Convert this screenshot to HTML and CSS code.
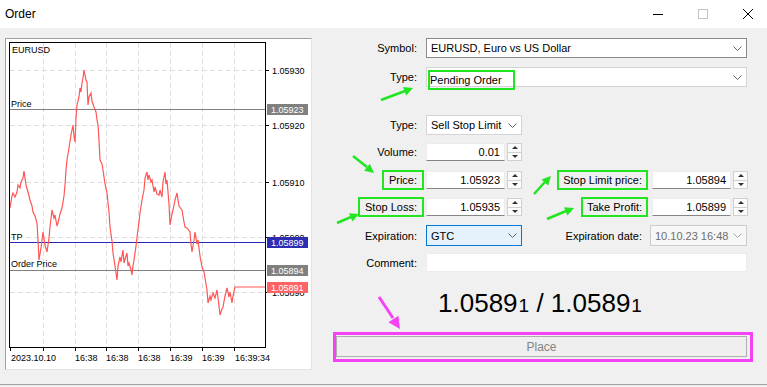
FILE: index.html
```html
<!DOCTYPE html>
<html lang="en">
<head>
    <meta charset="UTF-8">
    <title>Order</title>
    <link rel="stylesheet" href="styles.css">
</head>
<body>
    <div class="titlebar">
        <span class="title">Order</span>
        <div class="win-controls">
            <svg viewBox="0 0 10 10"><line x1="0" y1="5.5" x2="10" y2="5.5" stroke="#000"/></svg>
            <svg viewBox="0 0 10 10"><rect x="0.5" y="0.5" width="9" height="9" fill="none" stroke="#c4c4c4"/></svg>
            <svg viewBox="0 0 10 10"><path d="M0 0L10 10M10 0L0 10" stroke="#000" fill="none"/></svg>
        </div>
    </div>

    <div class="window">
        <div class="chart-panel">
            <svg class="chart" width="305" height="330" viewBox="6 39 305 330">
                <g class="grid">
                    <line x1="43.5" y1="43" x2="43.5" y2="347"/>
                    <line x1="75.5" y1="43" x2="75.5" y2="347"/>
                    <line x1="106.5" y1="43" x2="106.5" y2="347"/>
                    <line x1="138.5" y1="43" x2="138.5" y2="347"/>
                    <line x1="170.5" y1="43" x2="170.5" y2="347"/>
                    <line x1="202.5" y1="43" x2="202.5" y2="347"/>
                    <line x1="234.5" y1="43" x2="234.5" y2="347"/>
                    <line x1="10" y1="70.5" x2="265" y2="70.5"/>
                    <line x1="10" y1="125.5" x2="265" y2="125.5"/>
                    <line x1="10" y1="182.5" x2="265" y2="182.5"/>
                    <line x1="10" y1="237.5" x2="265" y2="237.5"/>
                    <line x1="10" y1="292.5" x2="265" y2="292.5"/>
                </g>

                <g class="ticks">
                    <line x1="265" y1="70.5" x2="269" y2="70.5"/>
                    <line x1="265" y1="125.5" x2="269" y2="125.5"/>
                    <line x1="265" y1="182.5" x2="269" y2="182.5"/>
                    <line x1="265" y1="237.5" x2="269" y2="237.5"/>
                    <line x1="265" y1="292.5" x2="269" y2="292.5"/>
                    <line x1="10.5" y1="347" x2="10.5" y2="351"/>
                    <line x1="43.5" y1="347" x2="43.5" y2="351"/>
                    <line x1="75.5" y1="347" x2="75.5" y2="351"/>
                    <line x1="106.5" y1="347" x2="106.5" y2="351"/>
                    <line x1="138.5" y1="347" x2="138.5" y2="351"/>
                    <line x1="170.5" y1="347" x2="170.5" y2="351"/>
                    <line x1="202.5" y1="347" x2="202.5" y2="351"/>
                    <line x1="234.5" y1="347" x2="234.5" y2="351"/>
                </g>

                <g class="axis-text">
                    <text x="272" y="74">1.05930</text>
                    <text x="272" y="129">1.05920</text>
                    <text x="272" y="186">1.05910</text>
                    <text x="272" y="241">1.05900</text>
                    <text x="272" y="296">1.05890</text>
                    <text x="11" y="361">2023.10.10</text>
                    <text x="75" y="361">16:38</text>
                    <text x="106" y="361">16:38</text>
                    <text x="138" y="361">16:38</text>
                    <text x="170" y="361">16:39</text>
                    <text x="202" y="361">16:39</text>
                    <text x="235" y="361">16:39:34</text>
                </g>

                <line class="lvl-grey" x1="10" y1="109.5" x2="265" y2="109.5"/>
                <line class="lvl-blue" x1="10" y1="242.5" x2="265" y2="242.5"/>
                <line class="lvl-grey" x1="10" y1="270.5" x2="265" y2="270.5"/>

                <polyline class="quote-line" points="10,208 12,196 13,193 15,197 17,192 18,185 20,188 21,182 23,178 24,171 26,185 28,192 30,200 32,206 33,212 35,216 37,223 38,240 39,260 41,248 43,232 45,245 47,252 49,238 50,227 52,210 54,218 55,215 57,226 58,223 60,214 62,208 64,196 65,185 66,170 67,160 69,148 71,135 72,130 73,125 74,136 75,142 76,118 77,105 79,97 80,88 81,92 82,83 83,78 84,70 86,80 87,82 88,105 89,97 91,93 92,101 94,107 96,112 97,120 98,125 99,140 100,160 102,164 103,170 105,184 107,193 109,212 110,227 112,241 113,253 115,266 117,280 118,266 120,257 121,262 123,250 124,263 126,256 127,253 128,266 129,263 131,270 132,275 133,266 134,260 136,246 137,237 139,222 140,213 142,200 144,190 145,178 147,172 148,180 149,175 151,182 152,180 154,192 155,187 157,194 159,195 160,190 162,197 163,182 165,172 166,184 167,180 169,204 170,225 172,214 173,210 175,200 177,193 179,206 182,210 184,222 185,227 187,228 190,232 191,244 192,252 194,240 195,232 197,244 198,240 200,256 202,267 204,272 205,278 206,284 207,290 208,303 210,296 211,300 213,293 215,298 217,290 219,306 220,315 222,309 223,307 225,296 227,288 229,297 230,292 232,303 233,296 235,287 265,287"/>

                <g class="chart-labels">
                    <text x="12" y="53">EURUSD</text>
                    <text x="11" y="107">Price</text>
                    <text x="11" y="240">TP</text>
                    <text x="11" y="267">Order Price</text>
                </g>

                <rect class="plot" x="9.5" y="42.5" width="256" height="305"/>

                <rect class="tag-grey" x="267" y="104" width="41" height="11"/>
                <rect class="tag-blue" x="267" y="237" width="41" height="11"/>
                <rect class="tag-grey" x="267" y="265" width="41" height="11"/>
                <rect class="tag-red" x="267" y="282" width="41" height="11"/>
                <g class="tag-text">
                    <text x="271" y="113">1.05923</text>
                    <text x="271" y="246">1.05899</text>
                    <text x="271" y="274">1.05894</text>
                    <text x="271" y="291">1.05891</text>
                </g>
            </svg>
        </div>

        <form class="order-form">
            <div class="row row-first">
                <label class="lbl"><span>Symbol:</span></label>
                <div class="combo combo-wide combo-dark">
                    <span>EURUSD, Euro vs US Dollar</span>
                    <svg class="chev" viewBox="0 0 9 5"><polyline points="0.5,0.5 4.5,4.5 8.5,0.5"/></svg>
                </div>
            </div>

            <div class="row">
                <label class="lbl"><span>Type:</span></label>
                <div class="combo combo-wide">
                    <span class="hl-inline">Pending Order</span>
                    <svg class="chev" viewBox="0 0 9 5"><polyline points="0.5,0.5 4.5,4.5 8.5,0.5"/></svg>
                </div>
            </div>

            <div class="row row-section">
                <label class="lbl"><span>Type:</span></label>
                <div class="combo combo-short">
                    <span>Sell Stop Limit</span>
                    <svg class="chev" viewBox="0 0 9 5"><polyline points="0.5,0.5 4.5,4.5 8.5,0.5"/></svg>
                </div>
            </div>

            <div class="row row-field row-tight">
                <label class="lbl"><span>Volume:</span></label>
                <div class="field">0.01</div>
                <div class="spin"><span class="up"></span><span class="down"></span></div>
            </div>

            <div class="row row-field row-loose">
                <label class="lbl"><span class="hl">Price:</span></label>
                <div class="field">1.05923</div>
                <div class="spin"><span class="up"></span><span class="down"></span></div>
                <label class="lbl-r"><span class="hl">Stop Limit price:</span></label>
                <div class="field">1.05894</div>
                <div class="spin"><span class="up"></span><span class="down"></span></div>
            </div>

            <div class="row row-field">
                <label class="lbl"><span class="hl">Stop Loss:</span></label>
                <div class="field">1.05935</div>
                <div class="spin"><span class="up"></span><span class="down"></span></div>
                <label class="lbl-r"><span class="hl">Take Profit:</span></label>
                <div class="field">1.05899</div>
                <div class="spin"><span class="up"></span><span class="down"></span></div>
            </div>

            <div class="row row-exp">
                <label class="lbl"><span>Expiration:</span></label>
                <div class="combo combo-short combo-focus">
                    <span>GTC</span>
                    <svg class="chev" viewBox="0 0 9 5"><polyline points="0.5,0.5 4.5,4.5 8.5,0.5"/></svg>
                </div>
                <label class="lbl-r lbl-exp"><span>Expiration date:</span></label>
                <div class="combo combo-date">
                    <span>10.10.23 16:48</span>
                    <svg class="chev" viewBox="0 0 9 5"><polyline points="0.5,0.5 4.5,4.5 8.5,0.5"/></svg>
                </div>
            </div>

            <div class="row row-comment">
                <label class="lbl"><span>Comment:</span></label>
                <div class="field field-wide"></div>
            </div>

            <div class="quote">1.0589<small>1</small> / 1.0589<small>1</small></div>

            <div class="place-wrap">
                <button type="button" class="btn-place">Place</button>
            </div>
        </form>
    </div>

    <svg class="marks" width="767" height="387" viewBox="0 0 767 387">
        <g class="arrow-green">
            <line x1="381" y1="100" x2="405" y2="91"/>
            <polygon points="413,88 406.2,95.4 403,87"/>
            <line x1="353" y1="156" x2="367" y2="167"/>
            <polygon points="374,173 364.2,170.8 369.8,163.8"/>
            <line x1="337" y1="223" x2="351" y2="217"/>
            <polygon points="359,214 352.4,221.6 349,213.2"/>
            <line x1="534" y1="194" x2="545" y2="182"/>
            <polygon points="551,176 548.1,185.6 541.5,179.4"/>
            <line x1="547" y1="219" x2="566" y2="211"/>
            <polygon points="574,208 567.4,215.6 564,207.2"/>
        </g>
        <g class="arrow-pink">
            <line x1="379" y1="297" x2="393" y2="318"/>
            <polygon points="400,329 388.4,322.3 398.4,315.7"/>
        </g>
    </svg>
</body>
</html>
```

FILE: styles.css
```css
* {
    margin: 0;
    padding: 0;
    box-sizing: border-box;
}

body {
    width: 767px;
    height: 387px;
    overflow: hidden;
    position: relative;
    background: #f0f0f0;
    font-family: "Liberation Sans", Arial, sans-serif;
    font-size: 11px;
    color: #000;
}

/* window chrome */
.titlebar {
    height: 28px;
    background: #fff;
    display: flex;
    align-items: center;
    padding-left: 5px;
}

.title {
    font-size: 12px;
}

.win-controls {
    margin-left: auto;
    margin-right: 14px;
    display: flex;
    gap: 35px;
}

.win-controls svg {
    display: block;
    width: 10px;
    height: 10px;
}

.window {
    display: flex;
    height: 357px;
    border-bottom: 1px solid #a0a0a0;
}

/* chart */
.chart-panel {
    width: 307px;
    height: 332px;
    margin: 10px 0 0 5px;
    background: #fff;
    border: 1px solid #e3e3e3;
    border-top-color: #a0a0a0;
    border-left-color: #a0a0a0;
}

.chart {
    display: block;
    font-family: "Liberation Sans", Arial, sans-serif;
    font-size: 9px;
}

.grid line {
    stroke: #dedede;
    stroke-dasharray: 5 3;
}

.ticks line {
    stroke: #000;
}

.plot {
    fill: none;
    stroke: #000;
}

.quote-line {
    fill: none;
    stroke: #ff5656;
    stroke-width: 1.2;
}

.lvl-grey {
    stroke: #808080;
}

.lvl-blue {
    stroke: #2727b8;
}

.tag-grey {
    fill: #808080;
}

.tag-blue {
    fill: #2d2db4;
}

.tag-red {
    fill: #ff6464;
}

.tag-text text {
    fill: #fff;
}

/* order form */
.order-form {
    width: 440px;
    margin-left: 8px;
    padding-top: 10px;
}

.row {
    display: flex;
    align-items: center;
    height: 20px;
    margin-top: 9px;
}

.row-first {
    margin-top: 0;
}

.row-section {
    margin-top: 28px;
}

.row-field {
    height: 18px;
}

.row-tight {
    margin-top: 8px;
}

.row-loose {
    margin-top: 10px;
}

.row-exp {
    height: 21px;
}

.row-comment {
    height: 19px;
    margin-top: 7px;
}

.lbl {
    width: 106px;
    padding-right: 2px;
    text-align: right;
}

.lbl-r {
    width: 130px;
    padding-right: 4px;
    text-align: right;
}

.lbl span,
.lbl-r span {
    display: inline-block;
    padding: 1px 5px;
    border: 2px solid transparent;
    line-height: 14px;
}

.lbl-r span {
    padding: 1px 4px;
}

.lbl span.hl,
.lbl-r span.hl {
    border-color: #22e522;
}

.lbl-exp {
    width: 128px;
    padding-right: 2px;
}

.combo {
    height: 100%;
    display: flex;
    align-items: center;
    justify-content: space-between;
    padding: 0 4px;
    background: #fff;
    border: 1px solid #d4d4d4;
}

.combo-wide {
    width: 321px;
}

.combo-short {
    width: 96px;
}

.combo-dark {
    border-color: #8a8a8a;
}

.combo-focus {
    background: #e5f1fb;
    border-color: #0078d7;
}

.combo-date {
    width: 97px;
    background: #f7f7f7;
    border-color: #cccccc;
    color: #6d6d6d;
}

.chev {
    width: 9px;
    height: 5px;
    flex-shrink: 0;
}

.chev polyline {
    fill: none;
    stroke: #606060;
}

.combo-date .chev polyline {
    stroke: #a8a8a8;
}

.hl-inline {
    position: relative;
    top: 3px;
    left: -3px;
    width: 87px;
    height: 20px;
    line-height: 16px;
    border: 2px solid #22e522;
}

.field {
    width: 79px;
    height: 18px;
    line-height: 16px;
    padding-right: 4px;
    text-align: right;
    background: #fff;
    border: 1px solid #ececec;
    border-bottom-color: #858585;
}

.field-wide {
    width: 321px;
    height: 19px;
    border-bottom-color: #ececec;
}

.spin {
    width: 15px;
    height: 18px;
    margin-left: 2px;
    display: flex;
    flex-direction: column;
    background: #fbfbfb;
    border: 1px solid #d0d0d0;
}

.spin span {
    flex: 1;
    display: flex;
    align-items: center;
    justify-content: center;
}

.spin .down {
    border-top: 1px solid #d0d0d0;
}

.spin .up::after {
    content: "";
    border-left: 3px solid transparent;
    border-right: 3px solid transparent;
    border-bottom: 3px solid #333;
}

.spin .down::after {
    content: "";
    border-left: 3px solid transparent;
    border-right: 3px solid transparent;
    border-top: 3px solid #333;
}

.quote {
    height: 30px;
    margin-top: 16px;
    text-align: center;
    font-size: 26px;
    line-height: 30px;
}

.quote small {
    font-size: 19px;
    line-height: 0;
    margin-left: 1px;
}

.place-wrap {
    width: 420px;
    height: 30px;
    margin: 14px 0 0 13px;
    padding: 1px 3px 0 0;
    border: 3px solid #f542f5;
}

.btn-place {
    display: block;
    width: 100%;
    height: 21px;
    background: #efefef;
    border: 1px solid #adadad;
    color: #858585;
    font-family: "Liberation Sans", Arial, sans-serif;
    font-size: 12px;
}

/* annotation arrows drawn over the dialog */
.marks {
    position: absolute;
    top: 0;
    left: 0;
    pointer-events: none;
}

.arrow-green line {
    stroke: #22e522;
    stroke-width: 2.5;
}

.arrow-green polygon {
    fill: #22e522;
}

.arrow-pink line {
    stroke: #f542f5;
    stroke-width: 3;
}

.arrow-pink polygon {
    fill: #f542f5;
}
```
